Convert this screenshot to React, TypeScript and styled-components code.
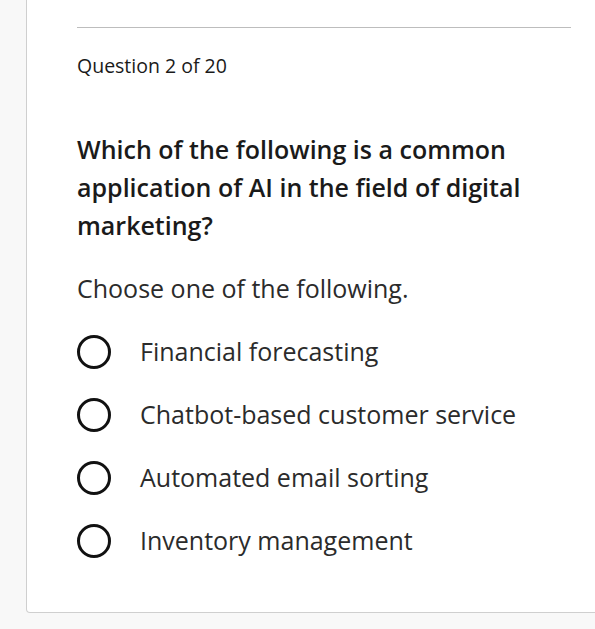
import React from 'react';
import styled, { createGlobalStyle } from 'styled-components';

const GlobalStyle = createGlobalStyle`
    html, body {
        margin: 0;
        padding: 0;
        background: #f8f8f8;
        overflow: hidden;
    }
    body {
        font-family: "Open Sans", "Liberation Sans", sans-serif;
        color: #1d1d1d;
    }
`;

const Page = styled.div`
    width: 595px;
    height: 629px;
    padding-left: 26px;
    box-sizing: border-box;
    overflow: hidden;
`;

const Card = styled.div`
    width: 600px;
    background: #ffffff;
    border: 1px solid #cfcfcf;
    border-top: none;
    border-radius: 0 0 4px 4px;
    padding: 27px 50px 41px 50px;
    box-sizing: border-box;
`;

const Divider = styled.hr`
    margin: 0;
    border: none;
    border-top: 1px solid #bdbdbd;
    width: 494px;
`;

const Counter = styled.div`
    margin-top: 26px;
    font-size: 19.5px;
    line-height: 24px;
    color: #1a1a1a;
`;

const Prompt = styled.h2`
    margin: 52px 0 0 0;
    font-size: 25px;
    font-weight: 600;
    line-height: 38px;
    color: #1a1a1a;
    width: 470px;
`;

const Hint = styled.div`
    margin-top: 25px;
    font-size: 25px;
    line-height: 38px;
    color: #2b2b2b;
`;

const Options = styled.div`
    margin-top: 12px;
    display: flex;
    flex-direction: column;
`;

const Option = styled.label`
    display: flex;
    align-items: center;
    height: 63px;
    gap: 29px;
    font-size: 25px;
    color: #2b2b2b;
    cursor: pointer;
`;

const Radio = styled.span`
    width: 34px;
    height: 34px;
    margin-top: 2px;
    border: 3px solid #111111;
    border-radius: 50%;
    box-sizing: border-box;
    flex-shrink: 0;
`;

const answers = [
    'Financial forecasting',
    'Chatbot-based customer service',
    'Automated email sorting',
    'Inventory management',
];

function App() {
    return (
        <Page>
            <GlobalStyle />
            <Card>
                <Divider />
                <Counter>Question 2 of 20</Counter>
                <Prompt>
                    Which of the following is a common application of AI in the field of digital marketing?
                </Prompt>
                <Hint>Choose one of the following.</Hint>
                <Options>
                    {answers.map((a) => (
                        <Option key={a}>
                            <Radio />
                            {a}
                        </Option>
                    ))}
                </Options>
            </Card>
        </Page>
    );
}

export default App;
